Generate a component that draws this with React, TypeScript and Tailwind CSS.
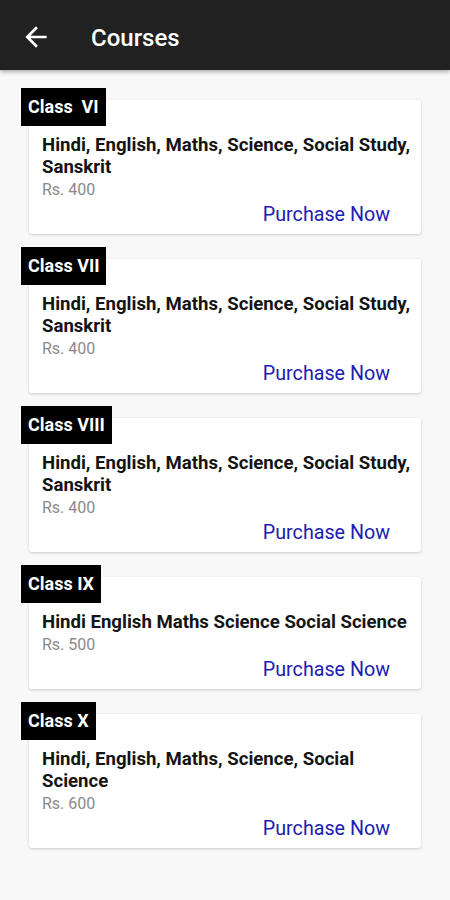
import React from "react";

const courses = [
  { label: "Class  VI", title: "Hindi, English, Maths, Science, Social Study, Sanskrit", price: "Rs. 400" },
  { label: "Class VII", title: "Hindi, English, Maths, Science, Social Study, Sanskrit", price: "Rs. 400" },
  { label: "Class VIII", title: "Hindi, English, Maths, Science, Social Study, Sanskrit", price: "Rs. 400" },
  { label: "Class IX", title: "Hindi English Maths Science Social Science", price: "Rs. 500" },
  { label: "Class X", title: "Hindi, English, Maths, Science, Social Science", price: "Rs. 600" },
];

export default function App() {
  return (
    <div className="w-[450px] h-[900px] bg-[#f8f8f8] overflow-hidden" style={{ fontFamily: "Roboto, 'Liberation Sans', sans-serif" }}>
      <header className="h-[70px] bg-[#212121] flex items-center shadow-[0_2px_4px_rgba(0,0,0,0.3)] relative z-10">
        <svg width="32" height="32" viewBox="0 0 24 24" className="ml-[20px] mt-[4px]" fill="white">
          <path d="M20 11H7.83l5.59-5.59L12 4l-8 8 8 8 1.41-1.41L7.83 13H20v-2z" />
        </svg>
        <h1 className="ml-[39px] mt-[5px] text-white text-[24px] font-medium leading-none">Courses</h1>
      </header>
      <main className="pt-[30px] pl-[29px] pr-[29px] flex flex-col gap-[25px]">
        {courses.map((c) => (
          <div key={c.label} className="relative bg-white rounded-[3px] shadow-[0_1px_3px_rgba(0,0,0,0.18)] pt-[34px] pl-[13px] pr-[7px] pb-[7px]">
            <div className="absolute left-[-8px] top-[-12px] h-[38px] bg-black px-[7px] flex items-center">
              <span className="text-white text-[18px] font-bold whitespace-pre leading-none">{c.label}</span>
            </div>
            <div className="text-[#141414] text-[18.6px] font-bold leading-[22px]">{c.title}</div>
            <div className="text-[#8a8a8a] text-[16px] leading-[20px] mt-[2px]">{c.price}</div>
            <div className="flex justify-end pr-[24px] mt-[3px]">
              <span className="text-[#2020b0] text-[19.7px] leading-[24px]">Purchase Now</span>
            </div>
          </div>
        ))}
      </main>
    </div>
  );
}
